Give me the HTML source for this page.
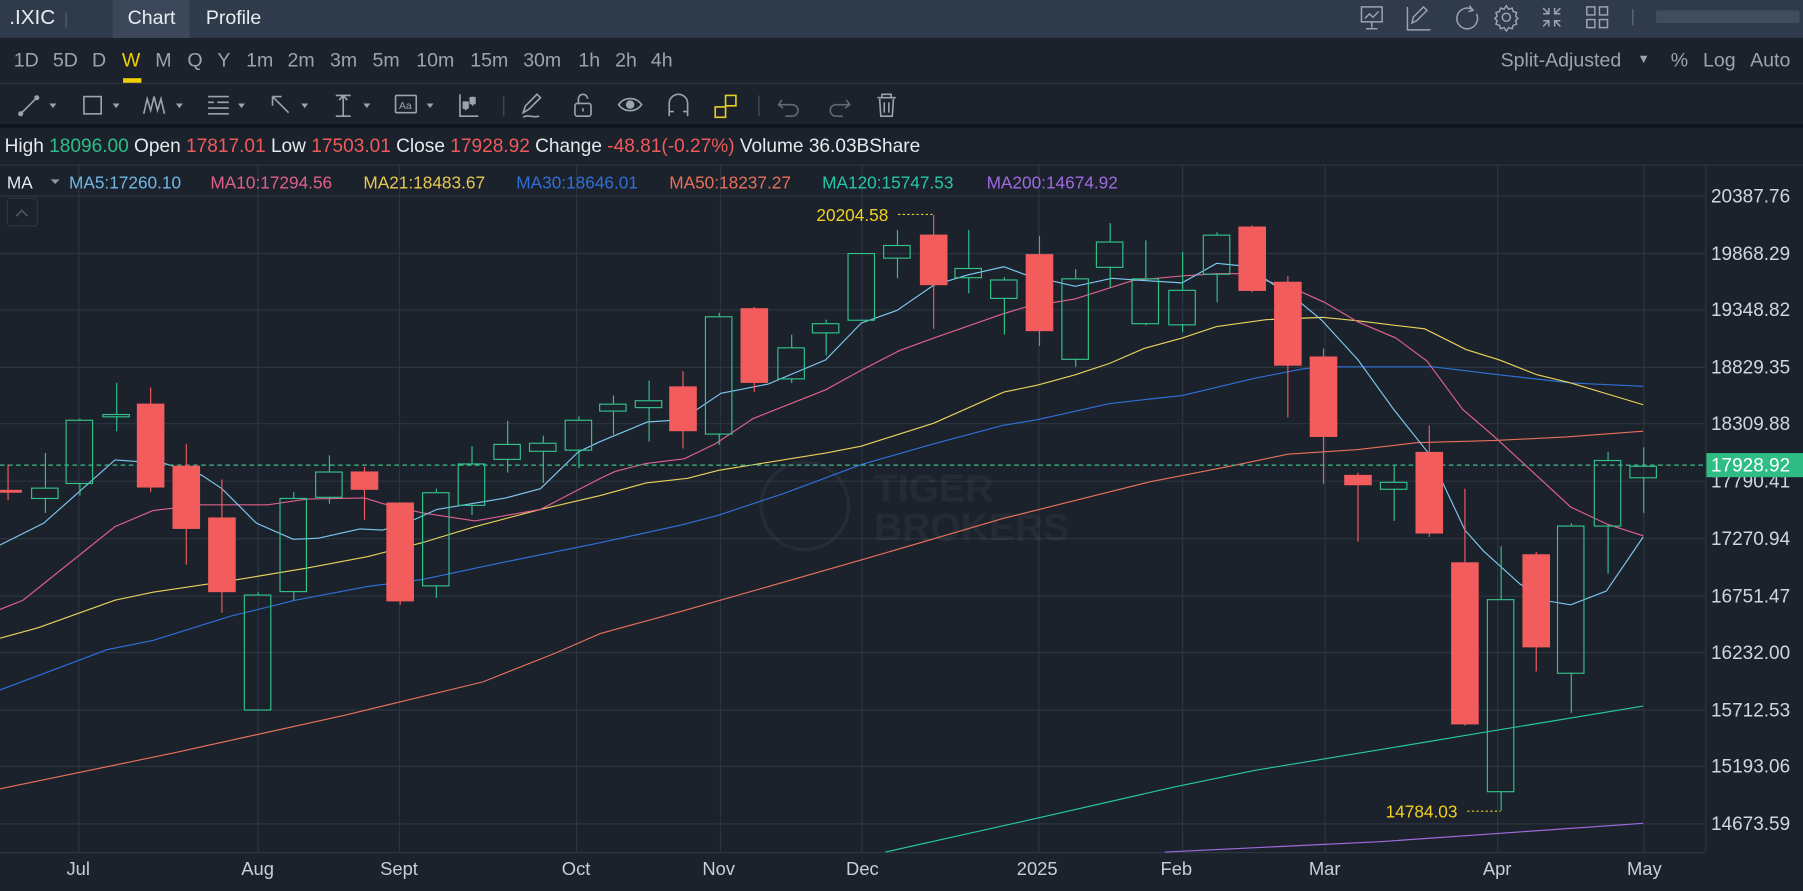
<!DOCTYPE html>
<html><head><meta charset="utf-8">
<style>
html,body{margin:0;padding:0;background:#1b222c;overflow:hidden;width:1803px;height:891px}
#w{position:absolute;left:0;top:0;width:1568px;height:775px;transform:scale(1.14987);transform-origin:0 0;background:#1b222c;font-family:"Liberation Sans",sans-serif;}
.t{position:absolute;white-space:nowrap}
.tf{position:absolute;top:43px;font-size:17px;color:#9aa4b0}
</style></head><body><div id="w">
<!-- top bar -->
<div class="t" style="left:0;top:0;width:1568px;height:33px;background:#2f3a4a"></div>
<div class="t" style="left:98px;top:0;width:67px;height:33px;background:#3c4859"></div>
<div class="t" style="left:8px;top:5px;font-size:18px;color:#e8ecf0">.IXIC</div>
<div class="t" style="left:57px;top:11px;width:1px;height:13px;background:#5a6575"></div>
<div class="t" style="left:111px;top:6px;font-size:17px;color:#e8ecf0">Chart</div>
<div class="t" style="left:179px;top:6px;font-size:17px;color:#e8ecf0">Profile</div>
<svg class="t" style="left:1170px;top:0" width="398" height="33" fill="none" stroke="#9aa4b0" stroke-width="1.3">
<rect x="14" y="6" width="18" height="13"/><path d="M23 19v5M18 25h10M17 16l4-4 3 3 5-5"/>
<path d="M54 6v20h20M58 20l1-5 9-9 3 3-9 9z"/>
<path d="M110 8a9 9 0 1 0 4 4M108 5l3 4-4 1"/>
<circle cx="140" cy="15" r="3.5"/><path d="M140 5l2 3 3-1 1 3 3 1-1 3 2 2-2 2 1 3-3 1-1 3-3-1-2 3-2-3-3 1-1-3-3-1 1-3-2-2 2-2-1-3 3-1 1-3 3 1z"/>
<path d="M172 7l5 5M177 7v5h-5M187 7l-5 5M182 7v5h5M172 23l5-5M172 18h5v5M187 23l-5-5M182 23v-5h5"/>
<rect x="210" y="6" width="7" height="7"/><rect x="221" y="6" width="7" height="7"/><rect x="210" y="17" width="7" height="7"/><rect x="221" y="17" width="7" height="7"/>
<path d="M250 8v14" stroke="#5a6575"/>
<rect x="270" y="9" width="125" height="11" fill="#414d5e" stroke="none" rx="2"/>
</svg>
<!-- timeframe row -->
<div class="t" style="left:0;top:72px;width:1568px;height:1px;background:#2b3440"></div>
<span class="tf" style="left:12px">1D</span><span class="tf" style="left:46px">5D</span><span class="tf" style="left:80px">D</span><span class="tf" style="left:106px;color:#f0d000">W</span><span class="tf" style="left:135px">M</span><span class="tf" style="left:163px">Q</span><span class="tf" style="left:189px">Y</span><span class="tf" style="left:214px">1m</span><span class="tf" style="left:250px">2m</span><span class="tf" style="left:287px">3m</span><span class="tf" style="left:324px">5m</span><span class="tf" style="left:362px">10m</span><span class="tf" style="left:409px">15m</span><span class="tf" style="left:455px">30m</span><span class="tf" style="left:503px">1h</span><span class="tf" style="left:535px">2h</span><span class="tf" style="left:566px">4h</span>
<div class="t" style="left:107px;top:68px;width:16px;height:4px;background:#f0d000"></div>
<div class="t" style="left:1305px;top:43px;font-size:17px;color:#9aa4b0">Split-Adjusted</div>
<div class="t" style="left:1424px;top:46px;font-size:11px;color:#9aa4b0">▼</div>
<div class="t" style="left:1453px;top:43px;font-size:17px;color:#9aa4b0">%</div>
<div class="t" style="left:1481px;top:43px;font-size:17px;color:#9aa4b0">Log</div>
<div class="t" style="left:1522px;top:43px;font-size:17px;color:#9aa4b0">Auto</div>
<!-- tools row -->
<svg class="t" style="left:0;top:73px" width="800" height="36" fill="none" stroke="#9aa4b0" stroke-width="1.4">
<path d="M18 26l14-14"/><circle cx="18" cy="26" r="1.5" fill="#9aa4b0"/><circle cx="32" cy="12" r="1.5" fill="#9aa4b0"/>
<rect x="73" y="11" width="15" height="15"/>
<path d="M125 26l3-13 3 10 3-12 3 12 3-10 3 13"/>
<path d="M181 11h18M181 16h5M189 16h10M181 21h18M181 26h18"/>
<path d="M237 11l14 14M237 11v8M237 11h8"/>
<path d="M292 10h13M292 28h13M298.5 10v18M295 14l3.5-4 3.5 4"/>
<rect x="344" y="10" width="18" height="15" rx="1"/><text x="347" y="22" font-size="9" fill="#9aa4b0" stroke="none" font-family="Liberation Sans">Aa</text>
<path d="M400 9v19h16M405 15v8M411 11v8"/><rect x="403" y="16" width="4" height="5" fill="#9aa4b0"/><rect x="409" y="12" width="4" height="5" fill="#9aa4b0"/>
<path d="M438 10v18" stroke="#3a4452"/>
<path d="M455 25l2-6 10-10 3 3-10 10zM455 29c4-3 8 1 14-1"/>
<rect x="500" y="17" width="14" height="11" rx="2"/><path d="M503 17v-4a4 4 0 0 1 8 0M507 21v3"/>
<path d="M538 18c5-7 15-7 20 0-5 7-15 7-20 0z"/><circle cx="548" cy="18" r="3" fill="#9aa4b0"/>
<path d="M582 28V17a8 8 0 0 1 16 0v11M582 24h4M594 24h4"/>
<rect x="622" y="20" width="9" height="9" stroke="#e8d020"/><rect x="631" y="10" width="9" height="9" stroke="#e8d020"/>
<path d="M660 10v18" stroke="#3a4452"/>
<path d="M680 14l-3 4 4 3M677 18h12a5 5 0 0 1 0 10h-6" stroke="#5f6977"/>
<path d="M736 14l3 4-4 3M739 18h-12a5 5 0 0 0 0 10h6" stroke="#5f6977"/>
<path d="M763 12h16M767 12V9h8v3M765 13l1 15h10l1-15M769 16v9M773 16v9"/>
<g fill="#9aa4b0" stroke="none"><path d="M43 17l3 4 3-4z"/><path d="M98 17l3 4 3-4z"/><path d="M153 17l3 4 3-4z"/><path d="M207 17l3 4 3-4z"/><path d="M262 17l3 4 3-4z"/><path d="M316 17l3 4 3-4z"/><path d="M371 17l3 4 3-4z"/></g>
</svg>
<div class="t" style="left:0;top:108px;width:1568px;height:3px;background:#10151b"></div>
<!-- info row -->
<div class="t" style="left:4px;top:117px;font-size:16.6px;color:#e6e9ee">High <span style="color:#2ebd85">18096.00</span> Open <span style="color:#f05a5a">17817.01</span> Low <span style="color:#f05a5a">17503.01</span> Close <span style="color:#f05a5a">17928.92</span> Change <span style="color:#f05a5a">-48.81(-0.27%)</span> Volume 36.03BShare</div>
<div class="t" style="left:0;top:143px;width:1568px;height:1px;background:#2b3440"></div>
<!-- chart -->
<svg class="t" style="left:0;top:0" width="1568" height="775" font-family="Liberation Sans">
<g stroke="#2c3540" stroke-width="1">
<path d="M0 170.5H1483M0 220.5H1483M0 269.5H1483M0 319.5H1483M0 368.5H1483M0 418.5H1483M0 468.5H1483M0 518.5H1483M0 567.5H1483M0 617.5H1483M0 666.5H1483M0 716.5H1483"/>
<path d="M68.5 144V741M224.5 144V741M347.5 144V741M501.5 144V741M626.5 144V741M749.5 144V741M903.5 144V741M1028.5 144V741M1152.5 144V741M1302.5 144V741M1429.5 144V741"/>
<path d="M1483.5 144V741M0 741.5H1483"/>
</g>
<!-- watermark -->
<g opacity="0.06" fill="none" stroke="#c8d0dc" stroke-width="3"><circle cx="700" cy="440" r="38"/></g>
<text x="760" y="436" font-size="34" font-weight="bold" fill="#c8d0dc" opacity="0.05">TIGER</text>
<text x="760" y="470" font-size="34" font-weight="bold" fill="#c8d0dc" opacity="0.05">BROKERS</text>
<!-- MA lines -->
<g fill="none" stroke-width="1">
<polyline stroke="#a06ae0" points="1013,741 1200,732 1429,716"/>
<polyline stroke="#26c6a8" points="770,741 900,712 1023,684 1091,670 1200,652 1290,637 1429,614"/>
<polyline stroke="#e8705a" points="0,686 150,655 300,622 420,593 483,568 522,551 595,531 749,487 872,451 1000,419 1072,405 1120,395 1181,391 1232,385 1301,383 1362,380 1429,375"/>
<polyline stroke="#2f6fd8" points="0,600 40,585 93,565 133,557 200,536 257,522 320,510 367,504 433,490 522,472 595,456 625,448 682,429 749,404 812,386 872,370 902,365 965,351 1000,347 1028,344 1091,329 1132,321 1150,319 1246,319 1304,326 1366,333 1429,336"/>
<polyline stroke="#e8d25a" points="0,555 33,546 100,522 133,515 180,508 213,503 267,494 320,484 367,472 413,458 470,443 522,431 562,420 598,416 625,409 662,403 718,394 749,388 812,368 873,341 902,335 935,326 965,316 995,303 1028,294 1058,284 1101,278 1150,276 1181,279 1239,286 1275,304 1304,313 1337,326 1366,333 1429,352"/>
<polyline stroke="#e0608a" points="0,530 20,522 100,458 133,444 175,439 233,439 267,434 317,433 333,438 367,446 413,453 470,443 522,416 535,410 562,403 595,399 622,386 655,364 718,339 749,322 782,305 812,294 872,273 892,267 935,260 985,244 1028,240 1058,238 1078,238 1101,244 1132,254 1152,263 1181,280 1214,294 1241,314 1272,356 1301,381 1326,404 1366,441 1398,456 1429,466"/>
<polyline stroke="#7ec8f0" points="0,474 38,455 100,400 143,403 175,413 193,425 223,455 255,469 277,468 313,460 333,461 360,452 380,443 410,438 440,433 470,425 503,393 522,384 563,367 593,365 627,342 668,334 718,313 749,281 780,270 812,248 842,239 873,232 892,239 935,249 967,242 995,244 1028,246 1058,229 1078,231 1101,243 1132,264 1149,278 1181,313 1212,356 1243,395 1274,461 1290,479 1322,508 1348,523 1366,526 1397,514 1429,467"/>
</g>
<path d="M0 404.5H1483" stroke="#3cbf8a" stroke-dasharray="4 3"/>
<!-- red candles -->
<g fill="#f25c5c" stroke="#f25c5c" stroke-width="1">
<path d="M7 404V435M131 337V428M162 386V491M193 417V533M317 406V452M348 437V526M594 323V390M656 267V341M812 187V286M904 205V301M1089 196V254M1120 240V363M1151 303V421M1181 411V471M1243 370V467M1274 425V631M1336 480V584"/>
<g stroke="none">
<rect x="-5" y="426" width="24" height="2.5"/><rect x="119" y="351" width="24" height="73"/><rect x="150" y="405" width="24" height="55"/><rect x="181" y="450" width="24" height="65"/><rect x="305" y="410" width="24" height="16"/><rect x="336" y="437" width="24" height="86"/><rect x="582" y="336" width="24" height="39"/><rect x="644" y="268" width="24" height="65"/><rect x="800" y="204" width="24" height="44"/><rect x="892" y="221" width="24" height="67"/><rect x="1077" y="197" width="24" height="56"/><rect x="1108" y="245" width="24" height="73"/><rect x="1139" y="310" width="24" height="70"/><rect x="1169" y="413" width="24" height="9"/><rect x="1231" y="393" width="24" height="71"/><rect x="1262" y="489" width="24" height="141"/><rect x="1324" y="482" width="24" height="81"/>
</g></g>
<!-- green candles -->
<g fill="none" stroke="#33c28a" stroke-width="1">
<path d="M39.5 394V424M39.5 433V446M69.5 364V365M69.5 420V431M101.5 333V360M101.5 362V375M224.5 515V517M255.5 428V433M255.5 514V522M286.5 396V410M286.5 432V438M379.5 425V428M379.5 509V520M410.5 388V403M410.5 439V448M441.5 366V386M441.5 399V411M472.5 379V385M472.5 392V420M503.5 362V365M503.5 391V407M533.5 344V351M533.5 357V378M564.5 331V348M564.5 354V384M625.5 272V275M625.5 377V387M688.5 291V302M688.5 329V333M718.5 278V281M718.5 289V309M780.5 200V213M780.5 224V242M842.5 200V233M842.5 241V255M873.5 241V243M873.5 259V291M935.5 234V242M935.5 312V319M965.5 194V210M965.5 232V250M996.5 209V242M996.5 281V283M1028.5 219V252M1028.5 282V289M1058.5 202V204M1058.5 238V263M1212.5 405V419M1212.5 425V453M1305.5 475V521M1305.5 688V705M1366.5 455V457M1366.5 585V620M1398.5 393V400M1398.5 457V499M1429.5 389V405M1429.5 415V446"/>
<rect x="27.5" y="424.5" width="23" height="9"/><rect x="57.5" y="365.5" width="23" height="55"/><rect x="89.5" y="360.5" width="23" height="2"/><rect x="212.5" y="517.5" width="23" height="100"/><rect x="243.5" y="433.5" width="23" height="81"/><rect x="274.5" y="410.5" width="23" height="22"/><rect x="367.5" y="428.5" width="23" height="81"/><rect x="398.5" y="403.5" width="23" height="36"/><rect x="429.5" y="386.5" width="23" height="13"/><rect x="460.5" y="385.5" width="23" height="7"/><rect x="491.5" y="365.5" width="23" height="26"/><rect x="521.5" y="351.5" width="23" height="6"/><rect x="552.5" y="348.5" width="23" height="6"/><rect x="613.5" y="275.5" width="23" height="102"/><rect x="676.5" y="302.5" width="23" height="27"/><rect x="706.5" y="281.5" width="23" height="8"/><rect x="737.5" y="220.5" width="23" height="58"/><rect x="768.5" y="213.5" width="23" height="11"/><rect x="830.5" y="233.5" width="23" height="8"/><rect x="861.5" y="243.5" width="23" height="16"/><rect x="923.5" y="242.5" width="23" height="70"/><rect x="953.5" y="210.5" width="23" height="22"/><rect x="984.5" y="242.5" width="23" height="39"/><rect x="1016.5" y="252.5" width="23" height="30"/><rect x="1046.5" y="204.5" width="23" height="34"/><rect x="1200.5" y="419.5" width="23" height="6"/><rect x="1293.5" y="521.5" width="23" height="167"/><rect x="1354.5" y="457.5" width="23" height="128"/><rect x="1386.5" y="400.5" width="23" height="57"/><rect x="1417.5" y="405.5" width="23" height="10"/>
</g>
<!-- annotations -->
<text x="710" y="192" font-size="15" fill="#f0d020">20204.58</text>
<path d="M781 186.5H812" stroke="#f0d020" stroke-dasharray="2 2"/>
<text x="1205" y="711" font-size="15" fill="#f0d020">14784.03</text>
<path d="M1276 705.5H1305" stroke="#f0d020" stroke-dasharray="2 2"/>
<!-- price axis -->
<g font-size="16.5" fill="#d0d6de">
<text x="1488" y="176">20387.76</text><text x="1488" y="226">19868.29</text><text x="1488" y="275">19348.82</text><text x="1488" y="325">18829.35</text><text x="1488" y="374">18309.88</text><text x="1488" y="424">17790.41</text><text x="1488" y="474">17270.94</text><text x="1488" y="524">16751.47</text><text x="1488" y="573">16232.00</text><text x="1488" y="623">15712.53</text><text x="1488" y="672">15193.06</text><text x="1488" y="722">14673.59</text>
</g>
<rect x="1484" y="394" width="84" height="21" fill="#2ebd85"/>
<text x="1488" y="410" font-size="16.5" fill="#ffffff">17928.92</text>
<!-- date axis -->
<g font-size="16" fill="#c8ced6" text-anchor="middle">
<text x="68" y="761">Jul</text><text x="224" y="761">Aug</text><text x="347" y="761">Sept</text><text x="501" y="761">Oct</text><text x="625" y="761">Nov</text><text x="750" y="761">Dec</text><text x="902" y="761">2025</text><text x="1023" y="761">Feb</text><text x="1152" y="761">Mar</text><text x="1302" y="761">Apr</text><text x="1430" y="761">May</text>
</g>
<!-- MA header -->
<g font-size="15">
<text x="6" y="164" fill="#e6e9ee">MA</text><path d="M44 156l4 4 4-4z" fill="#8a94a0"/>
<text x="60" y="164" fill="#6fb8e8">MA5:17260.10</text>
<text x="183" y="164" fill="#e0608a">MA10:17294.56</text>
<text x="316" y="164" fill="#e8c850">MA21:18483.67</text>
<text x="449" y="164" fill="#2f6fd8">MA30:18646.01</text>
<text x="582" y="164" fill="#e8705a">MA50:18237.27</text>
<text x="715" y="164" fill="#26c6a8">MA120:15747.53</text>
<text x="858" y="164" fill="#a06ae0">MA200:14674.92</text>
</g>
<rect x="6.5" y="172.5" width="26" height="24" rx="2" fill="none" stroke="#2c3540"/>
<path d="M14 188l5-5 5 5" fill="none" stroke="#4a5462" stroke-width="1.5"/>
</svg>
</div></body></html>
